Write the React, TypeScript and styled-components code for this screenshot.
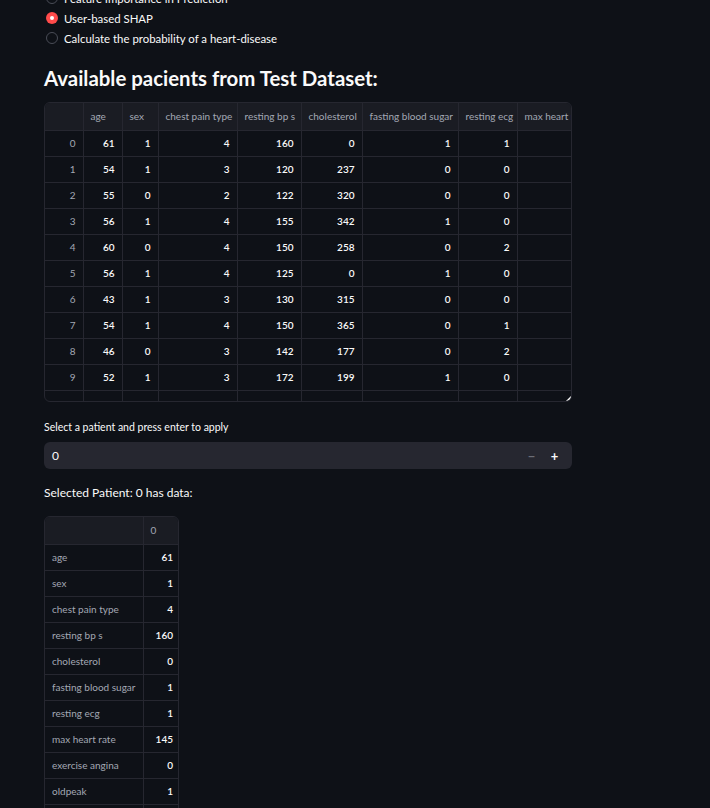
import React from "react";
import styled, { createGlobalStyle } from "styled-components";

const Global = createGlobalStyle`
  html, body { margin: 0; padding: 0; background: #0e1117; }
  body { font-family: "Lato", "Roboto", sans-serif; color: #fafafa; overflow: hidden; }
`;

const Page = styled.div`
  padding-left: 44px;
  width: 528px;
  display: flex;
  flex-direction: column;
`;

const RadioGroup = styled.div`
  margin-top: -12px;
  display: flex;
  flex-direction: column;
`;

const RadioRow = styled.div`
  height: 20px;
  display: flex;
  align-items: center;
  gap: 6px;
  font-size: 11.4px;
  color: #fafafa;
`;

const RadioDot = styled.span<{ $on?: boolean }>`
  width: 12px;
  height: 12px;
  border-radius: 50%;
  box-sizing: border-box;
  margin-left: 2px;
  background: ${(p) => (p.$on ? "#ff4b4b" : "#0e1117")};
  border: ${(p) => (p.$on ? "none" : "1px solid #4a4d57")};
  display: flex;
  align-items: center;
  justify-content: center;
  &::after {
    content: "";
    width: 4px;
    height: 4px;
    border-radius: 50%;
    background: #fff;
    display: ${(p) => (p.$on ? "block" : "none")};
  }
`;

const Title = styled.h2`
  margin: 17px 0 0;
  font-size: 20.4px;
  font-weight: 700;
  line-height: 26px;
`;

const GridFrame = styled.div<{ $w: number; $h: number }>`
  position: relative;
  width: ${(p) => p.$w}px;
  height: ${(p) => p.$h}px;
  border: 1px solid #262730;
  border-radius: 6px;
  overflow: hidden;
  box-sizing: border-box;
`;

const Table = styled.table<{ $w: number }>`
  width: ${(p) => p.$w}px;
  border-collapse: collapse;
  table-layout: fixed;
  font-size: 10px;
`;

const HeadCell = styled.th<{ $w: number }>`
  width: ${(p) => p.$w}px;
  height: 27px;
  padding: 0 7px;
  box-sizing: border-box;
  background: #1a1c23;
  color: #a3a8b4;
  font-weight: 400;
  text-align: left;
  white-space: nowrap;
  overflow: hidden;
  border-right: 1px solid #262730;
  border-bottom: 1px solid #262730;
  &:last-child { border-right: none; }
`;

const Cell = styled.td<{ $label?: boolean; $left?: boolean }>`
  height: 26px;
  padding: 0 7px;
  box-sizing: border-box;
  text-align: ${(p) => (p.$left ? "left" : "right")};
  color: ${(p) => (p.$label ? "#a3a8b4" : "#fafafa")};
  font-weight: ${(p) => (p.$label ? 400 : 600)};
  white-space: nowrap;
  overflow: hidden;
  border-right: 1px solid #262730;
  border-bottom: 1px solid #262730;
  &:last-child { border-right: none; }
`;

const Resize = styled.div`
  position: absolute;
  right: 0;
  bottom: 0;
  width: 0;
  height: 0;
  border-left: 5px solid transparent;
  border-bottom: 5px solid #ffffff;
`;

const Label = styled.div`
  margin-top: 18px;
  font-size: 10.5px;
  line-height: 14px;
  color: #fafafa;
`;

const NumberInput = styled.div`
  margin-top: 8px;
  width: 528px;
  height: 27px;
  background: #262730;
  border-radius: 6px;
  display: flex;
  align-items: center;
  padding: 0 6px 0 8px;
  box-sizing: border-box;
  font-size: 12px;
`;

const Value = styled.span`
  flex: 1;
`;

const Step = styled.span<{ $dim?: boolean }>`
  width: 23px;
  text-align: center;
  font-size: 13px;
  font-weight: 700;
  color: ${(p) => (p.$dim ? "#6b6d76" : "#fafafa")};
`;

const SubTitle = styled.div`
  margin-top: 16px;
  font-size: 12px;
  line-height: 16px;
`;

const Spacer = styled.div<{ $h: number }>`
  height: ${(p) => p.$h}px;
`;

const cols = [
  { name: "", w: 38 },
  { name: "age", w: 39 },
  { name: "sex", w: 36 },
  { name: "chest pain type", w: 79 },
  { name: "resting bp s", w: 64 },
  { name: "cholesterol", w: 61 },
  { name: "fasting blood sugar", w: 96 },
  { name: "resting ecg", w: 59 },
  { name: "max heart rate", w: 80 },
];
const totalW = cols.reduce((a, c) => a + c.w, 0);

const rows = [
  [61, 1, 4, 160, 0, 1, 1],
  [54, 1, 3, 120, 237, 0, 0],
  [55, 0, 2, 122, 320, 0, 0],
  [56, 1, 4, 155, 342, 1, 0],
  [60, 0, 4, 150, 258, 0, 2],
  [56, 1, 4, 125, 0, 1, 0],
  [43, 1, 3, 130, 315, 0, 0],
  [54, 1, 4, 150, 365, 0, 1],
  [46, 0, 3, 142, 177, 0, 2],
  [52, 1, 3, 172, 199, 1, 0],
];

const patient: [string, number][] = [
  ["age", 61],
  ["sex", 1],
  ["chest pain type", 4],
  ["resting bp s", 160],
  ["cholesterol", 0],
  ["fasting blood sugar", 1],
  ["resting ecg", 1],
  ["max heart rate", 145],
  ["exercise angina", 0],
  ["oldpeak", 1],
  ["ST slope", 2],
];

export default function App() {
  return (
    <>
      <Global />
      <Page>
        <RadioGroup>
          <RadioRow><RadioDot />Feature Importance in Prediction</RadioRow>
          <RadioRow><RadioDot $on />User-based SHAP</RadioRow>
          <RadioRow><RadioDot />Calculate the probability of a heart-disease</RadioRow>
        </RadioGroup>
        <Title>Available pacients from Test Dataset:</Title>
        <Spacer $h={11} />
        <GridFrame $w={528} $h={300}>
          <Table $w={totalW}>
            <thead>
              <tr>
                {cols.map((c, i) => (
                  <HeadCell key={i} $w={c.w}>{c.name}</HeadCell>
                ))}
              </tr>
            </thead>
            <tbody>
              {rows.map((r, i) => (
                <tr key={i}>
                  <Cell $label>{i}</Cell>
                  {r.map((v, j) => (
                    <Cell key={j}>{v}</Cell>
                  ))}
                  <Cell />
                </tr>
              ))}
              <tr>
                {cols.map((_, i) => (
                  <Cell key={i} />
                ))}
              </tr>
            </tbody>
          </Table>
          <Resize />
        </GridFrame>
        <Label>Select a patient and press enter to apply</Label>
        <NumberInput>
          <Value>0</Value>
          <Step $dim>−</Step>
          <Step>+</Step>
        </NumberInput>
        <SubTitle>Selected Patient: 0 has data:</SubTitle>
        <Spacer $h={15} />
        <GridFrame $w={135} $h={320}>
          <Table $w={135}>
            <thead>
              <tr>
                <HeadCell $w={98}></HeadCell>
                <HeadCell $w={37}>0</HeadCell>
              </tr>
            </thead>
            <tbody>
              {patient.map(([k, v]) => (
                <tr key={k}>
                  <Cell $label $left>{k}</Cell>
                  <Cell>{v}</Cell>
                </tr>
              ))}
            </tbody>
          </Table>
        </GridFrame>
      </Page>
    </>
  );
}
